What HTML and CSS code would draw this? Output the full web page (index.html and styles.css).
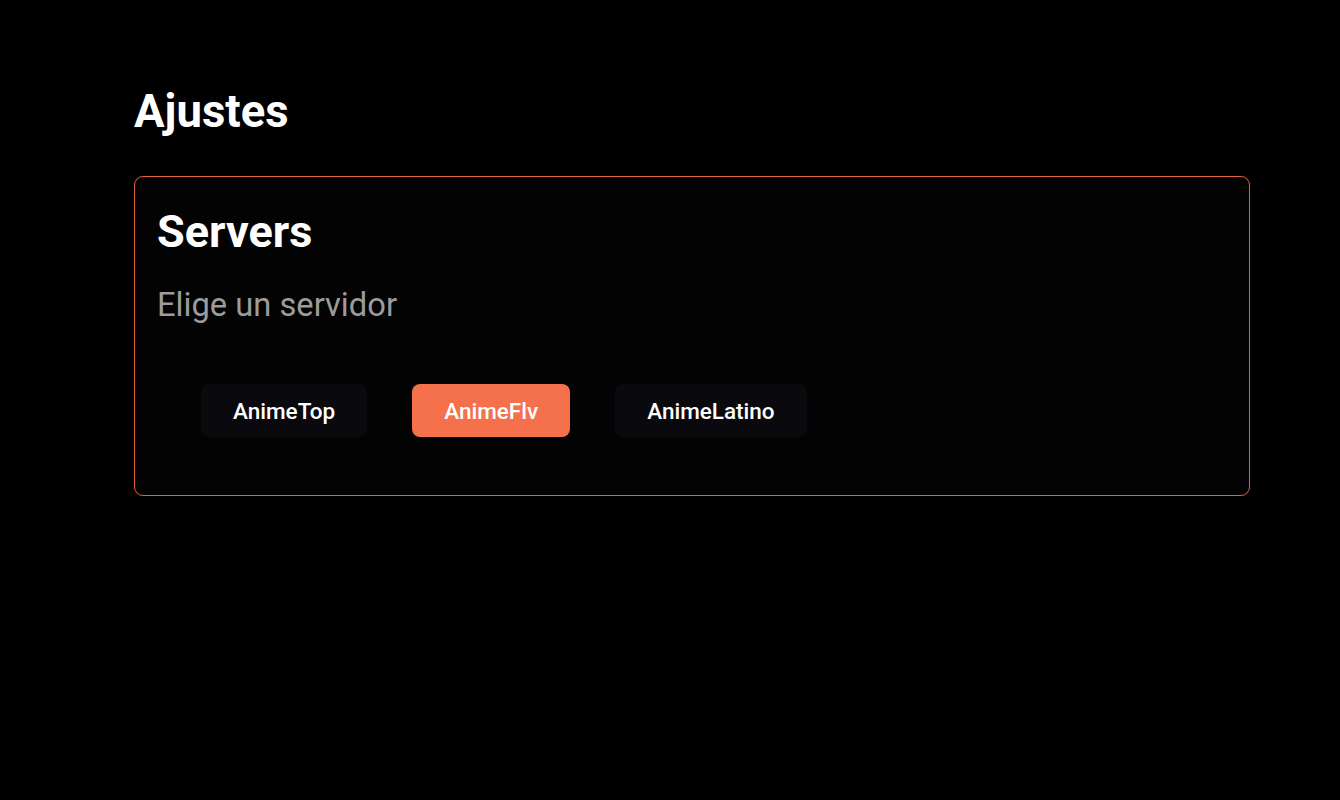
FILE: index.html
```html
<!DOCTYPE html>
<html lang="es">
<head>
<meta charset="utf-8">
<title>Ajustes</title>
<link rel="stylesheet" href="styles.css">
</head>
<body>
<main class="page">
  <h1 class="page-title">Ajustes</h1>
  <section class="card">
    <h2 class="card-title">Servers</h2>
    <p class="card-sub">Elige un servidor</p>
    <div class="servers">
      <button class="server">AnimeTop</button>
      <button class="server active">AnimeFlv</button>
      <button class="server">AnimeLatino</button>
    </div>
  </section>
</main>
</body>
</html>
```
FILE: styles.css
```css
* { box-sizing: border-box; }
html, body { margin: 0; padding: 0; background: #000; }
body { font-family: Roboto, "Noto Sans", sans-serif; color: #fff; }
.page { padding: 85px 90px 0 134px; }
.page-title { margin: 0; font-size: 45.5px; font-weight: 700; line-height: 54px; }
.card {
  margin-top: 37px;
  border: 1px solid #e2613a;
  border-radius: 9px;
  background: #030304;
  padding: 28px 22px 58px 22px;
}
.card-title { margin: 0; font-size: 45px; font-weight: 700; line-height: 54px; }
.card-sub { margin: 26px 0 0; font-size: 32.7px; line-height: 40px; color: #9c9c9c; font-weight: 400; }
.servers { display: flex; gap: 45px; margin-top: 59px; padding-left: 44px; }
.server {
  font-family: inherit;
  font-size: 22.5px;
  font-weight: 500;
  color: #fff;
  background: #0a0a0e;
  border: none;
  border-radius: 8px;
  height: 53px;
  padding: 0 32px;
}
.server.active { background: #f4714c; }
```
